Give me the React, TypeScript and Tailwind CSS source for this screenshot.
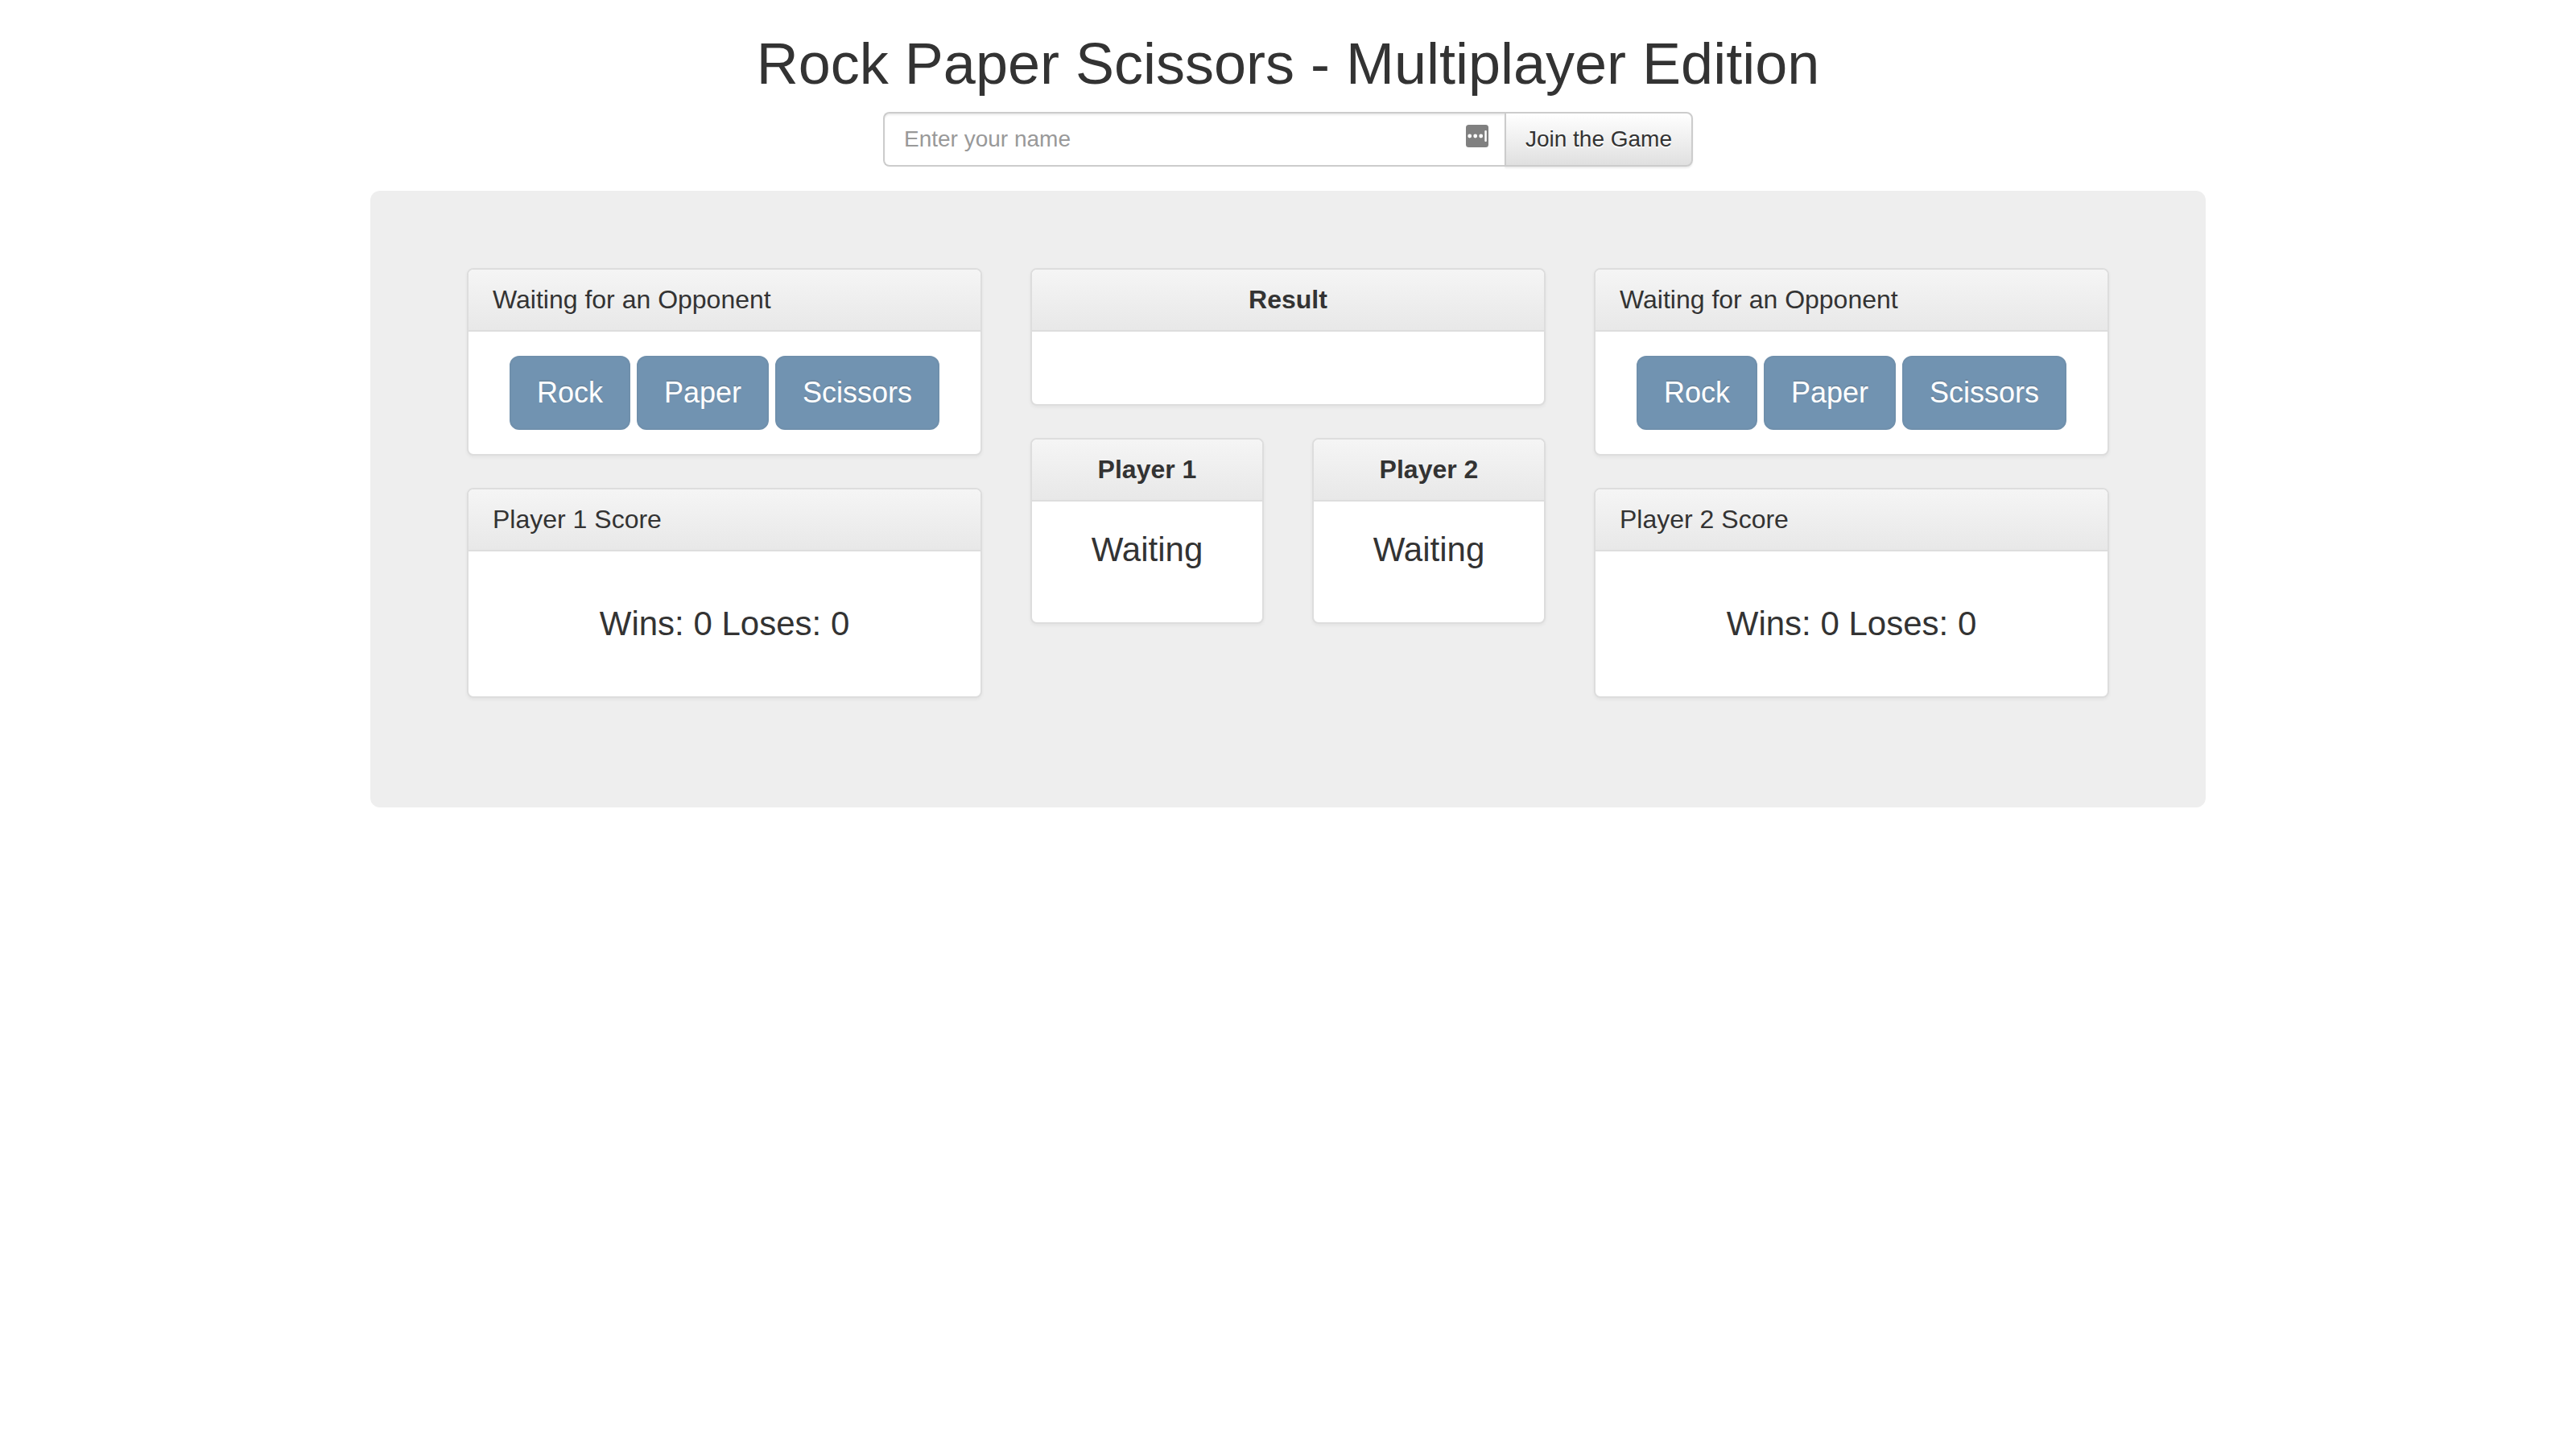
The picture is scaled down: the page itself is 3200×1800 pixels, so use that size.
import { useState } from "react";
import type { ReactNode } from "react";

const MOVES = ["Rock", "Paper", "Scissors"];

function Panel({
  title,
  centered = false,
  children,
}: {
  title: string;
  centered?: boolean;
  children?: ReactNode;
}) {
  return (
    <section className="rounded-[8px] border-2 border-[#ddd] bg-white shadow-[0_2px_4px_rgba(0,0,0,0.05)]">
      <h3
        className={
          "rounded-t-[6px] border-b-2 border-[#ddd] bg-linear-to-b from-[#f5f5f5] to-[#e8e8e8] px-[30px] py-5 text-[32px] leading-[35px] " +
          (centered ? "text-center font-bold" : "font-normal")
        }
      >
        {title}
      </h3>
      <div className="min-h-[90px] p-[30px] text-center">{children}</div>
    </section>
  );
}

function PlayerColumn({ player }: { player: number }) {
  return (
    <div className="flex flex-col gap-10">
      <Panel title="Waiting for an Opponent">
        <div className="flex flex-wrap justify-center gap-2">
          {MOVES.map((move) => (
            <button
              key={move}
              type="button"
              disabled
              className="cursor-not-allowed rounded-[12px] border-2 border-[#245580] bg-[#265a88] px-8 py-5 text-[36px] leading-[48px] text-white opacity-65 [text-shadow:0_-2px_0_rgba(0,0,0,0.2)]"
            >
              {move}
            </button>
          ))}
        </div>
      </Panel>
      <Panel title={`Player ${player} Score`}>
        <p className="py-[30px] text-[42px] leading-[60px]">Wins: 0 Loses: 0</p>
      </Panel>
    </div>
  );
}

function AutofillIcon() {
  return (
    <svg viewBox="0 0 28 28" className="size-7" aria-hidden="true">
      <rect width="28" height="28" rx="3.5" fill="#808080" />
      <circle cx="4.7" cy="14" r="2.4" fill="#fff" />
      <circle cx="11.7" cy="14" r="2.4" fill="#fff" />
      <circle cx="18.7" cy="14" r="2.4" fill="#fff" />
      <rect x="23.3" y="7" width="2.5" height="14" rx="1" fill="#fff" />
    </svg>
  );
}

export default function App() {
  const [name, setName] = useState("");

  return (
    <div className="min-h-screen bg-white font-['Liberation_Sans',Arial,sans-serif] text-[28px] leading-10 text-[#333]">
      <main className="mx-auto max-w-[2280px] pt-10">
        <h1 className="mb-5 text-center text-[72px] leading-[79px] font-normal">
          Rock Paper Scissors - Multiplayer Edition
        </h1>

        <form
          className="mx-auto mb-[30px] flex w-full max-w-[1006px]"
          onSubmit={(event) => event.preventDefault()}
        >
          <div className="relative min-w-0 flex-1">
            <input
              type="text"
              aria-label="Enter your name"
              placeholder="Enter your name"
              value={name}
              onChange={(event) => setName(event.target.value)}
              className="block w-full rounded-l-[8px] border-2 border-r-0 border-[#ccc] bg-white py-3 pr-16 pl-6 leading-10 text-[#555] shadow-[inset_0_2px_2px_rgba(0,0,0,0.075)] outline-none placeholder:text-[#999]"
            />
            <span className="pointer-events-none absolute top-4 right-5">
              <AutofillIcon />
            </span>
          </div>
          <button
            type="submit"
            className="shrink-0 rounded-r-[8px] border-2 border-[#ccc] bg-linear-to-b from-white to-[#e0e0e0] px-6 py-3 leading-10 shadow-[0_2px_2px_rgba(0,0,0,0.075)] [text-shadow:0_2px_0_#fff]"
          >
            Join the Game
          </button>
        </form>

        <div className="rounded-[12px] bg-[#eee] px-[120px] pt-24 pb-[136px]">
          <div className="grid grid-cols-1 items-start gap-[60px] lg:grid-cols-3">
            <PlayerColumn player={1} />
            <div className="flex flex-col gap-10">
              <Panel title="Result" centered />
              <div className="grid grid-cols-2 gap-[60px]">
                {[1, 2].map((player) => (
                  <Panel key={player} title={`Player ${player}`} centered>
                    <p className="mb-[30px] text-[42px] leading-[60px]">Waiting</p>
                  </Panel>
                ))}
              </div>
            </div>
            <PlayerColumn player={2} />
          </div>
        </div>
      </main>
    </div>
  );
}
